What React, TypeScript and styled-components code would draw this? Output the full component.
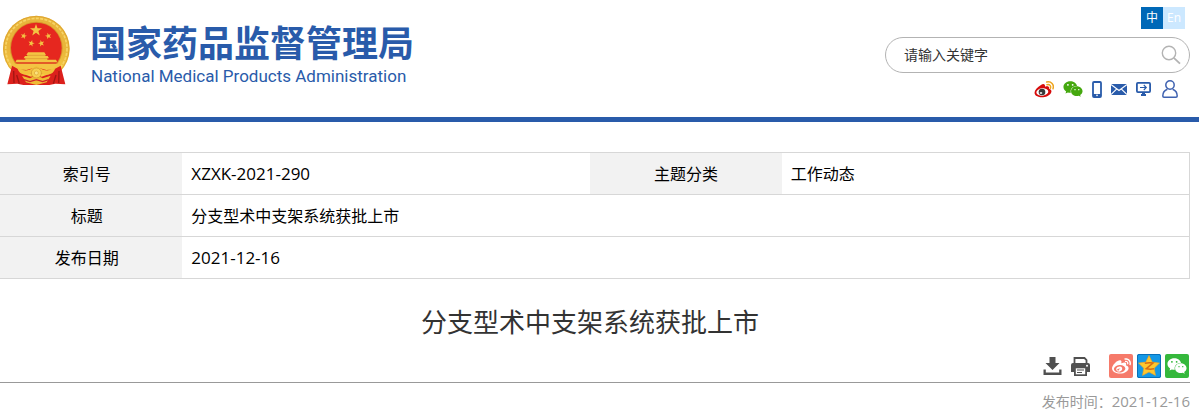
import React from "react";
import styled, { createGlobalStyle } from "styled-components";
import { FaWeibo, FaWeixin } from "react-icons/fa";

const Global = createGlobalStyle`
  * { box-sizing: border-box; }
  body {
    margin: 0;
    background: #fff;
    color: #000;
    font-family: "Open Sans", "Noto Sans CJK SC", sans-serif;
    font-size: 16px;
    overflow-x: hidden;
  }
  svg { display: block; }
`;

const Header = styled.header`
  display: flex;
  justify-content: space-between;
  height: 122px;
  padding: 7px 9px 0 3px;
  border-bottom: 5px solid #295baa;
`;

const Brand = styled.a`
  display: flex;
  align-items: flex-start;
  gap: 19px;
  padding-top: 8px;
  color: #295baa;
  text-decoration: none;
`;

const BrandText = styled.div`
  display: flex;
  flex-direction: column;
  padding-top: 10px;
  white-space: nowrap;
`;

const BrandName = styled.span`
  font: 700 36px/40px "Liberation Sans", "Noto Sans CJK SC", sans-serif;
`;

const BrandSub = styled.span`
  padding-left: 1px;
  font: 400 17px/22px Roboto, sans-serif;
`;

const Tools = styled.div`
  display: flex;
  flex-direction: column;
  align-items: flex-end;
  gap: 8px;
`;

const Languages = styled.nav`
  display: flex;
  padding-right: 5px;
`;

const Language = styled.a<{ $active?: boolean }>`
  width: 22px;
  height: 22px;
  background: ${(p) => (p.$active ? "#0068b7" : "#cce8ff")};
  color: #fff;
  font-size: 12px;
  line-height: 22px;
  text-align: center;
  text-decoration: none;
`;

const Search = styled.form`
  display: flex;
  align-items: center;
  width: 305px;
  height: 36px;
  padding: 0 8px 0 18px;
  border: 1px solid #b3b3b3;
  border-radius: 18px;
`;

const SearchInput = styled.input`
  flex: 1;
  min-width: 0;
  padding: 0;
  border: 0;
  outline: 0;
  background: none;
  color: #333;
  font: 14px/20px "Open Sans", "Noto Sans CJK SC", sans-serif;
  &::placeholder { color: #333; opacity: 1; }
`;

const IconButton = styled.button`
  display: flex;
  padding: 0;
  border: 0;
  background: none;
  color: #505050;
  cursor: pointer;
`;

const Shortcuts = styled.nav`
  display: flex;
  align-items: center;
  gap: 9px;
  height: 16px;
  padding-right: 12px;
`;

const Shortcut = styled.a`
  display: flex;
  color: #295baa;
`;

const Main = styled.main`
  margin: 30px 9px 0 -10px;
`;

const InfoTable = styled.table`
  width: 100%;
  table-layout: fixed;
  border-collapse: collapse;
  border: 1px solid #d7d7d7;
`;

const InfoRow = styled.tr`
  height: 42px;
  border-top: 1px solid #d7d7d7;
`;

const Label = styled.th`
  width: 16%;
  padding: 0;
  background: #f2f2f2;
  font-weight: 400;
  line-height: 24px;
`;

const Value = styled.td<{ $latin?: boolean }>`
  padding: 0 9px;
  font-size: ${(p) => (p.$latin ? "17px" : "16px")};
  line-height: 24px;
`;

const Title = styled.h1`
  margin: 23px 0 12px;
  color: #333;
  font-size: 26px;
  font-weight: 400;
  line-height: 40px;
  text-align: center;
`;

const Actions = styled.div`
  display: flex;
  justify-content: flex-end;
  align-items: center;
  gap: 9px;
  padding: 0 1px 4px 0;
  border-bottom: 1px solid #999;
`;

const Share = styled.div`
  display: flex;
  gap: 4px;
  padding-left: 10px;
`;

const ShareLink = styled.a<{ $bg: string }>`
  display: flex;
  align-items: center;
  justify-content: center;
  width: 24px;
  height: 24px;
  border-radius: 2px;
  background: ${(p) => p.$bg};
  color: #fff;
`;

const Published = styled.p`
  margin: 7px 0 0;
  color: #999;
  font-size: 14px;
  line-height: 22px;
  text-align: right;

  time { font-size: 15px; }
`;

const starPoints = (cx: number, cy: number, r: number, inner = 0.4, turn = 0) =>
  Array.from({ length: 10 }, (_, i) => {
    const a = ((i * 36 - 90 + turn) * Math.PI) / 180;
    const d = i % 2 ? r * inner : r;
    return `${(cx + d * Math.cos(a)).toFixed(1)},${(cy + d * Math.sin(a)).toFixed(1)}`;
  }).join(" ");

const Emblem = () => (
  <svg width="68" height="72" viewBox="9 28 204 216" aria-hidden="true">
    <defs>
      <linearGradient id="gold" x1="0" y1="0" x2="0" y2="1">
        <stop offset="0" stopColor="#e8b43c" />
        <stop offset=".5" stopColor="#e9b53a" />
        <stop offset="1" stopColor="#f8cf45" />
      </linearGradient>
    </defs>
    <ellipse cx="109" cy="129" rx="100" ry="99" fill="url(#gold)" />
    <ellipse cx="109" cy="129" rx="92" ry="91" fill="none" stroke="#f7d466" strokeWidth="5" strokeDasharray="9 4" />
    <ellipse cx="109" cy="129" rx="98" ry="97" fill="none" stroke="#d99f2b" strokeWidth="2" />
    <circle cx="109" cy="127" r="79" fill="#d8942a" />
    <circle cx="109" cy="127" r="76" fill="#e6271f" />
    <g fill="#f3c443">
      <polygon points={starPoints(108, 74, 19)} />
      <polygon points={starPoints(71, 91, 10, 0.4, 15)} />
      <polygon points={starPoints(145, 91, 10, 0.4, -15)} />
      <polygon points={starPoints(94, 113, 10, 0.4, 15)} />
      <polygon points={starPoints(124, 113, 10, 0.4, -15)} />
      <path d="M84 140h49l5 8H79zM82 148h54v3h7l4 7h-5v4h26l4 8H46l4-8h26v-4h-5l4-7h7z" />
      <path d="M45 174h128l-8 17-26 2-30-8-30 8-26-2z" />
    </g>
    <path d="M82 149h54M76 159h66M47 172h124" stroke="#d0832a" strokeWidth="1.5" />
    <path d="M36 180l18 10 14 14 25 9 16-6 16 6 25-9 14-14 18-10 14 56-30-2-18 4H70l-18-4-30 2z" fill="#dc201c" />
    <path d="M52 184c10 11 24 12 37 8l20-11 20 11c13 4 27 3 37-8-2 20-20 27-38 20l-19-9-19 9c-18 7-36 0-38-20z" fill="#f2c03a" />
    <path d="M50 208l8 26M168 208l-8 26M41 196l1 36M177 196l-1 36" stroke="#a01613" strokeWidth="4" />
    <path d="M66 210l24 8 19-10 19 10 24-8-12 20-31 8-31-8z" fill="#efbb36" />
    <circle cx="109" cy="202" r="15" fill="#f7cf50" stroke="#cf902a" strokeWidth="2" />
    <circle cx="109" cy="202" r="6" fill="#fbe27e" stroke="#dca436" strokeWidth="2" />
    <path d="M72 222l18 6 19-6 19 6 18-6" fill="none" stroke="#d2232a" strokeWidth="4" />
  </svg>
);

const WeiboColor = () => (
  <svg width="20" height="17" viewBox="0 0 60 51" aria-hidden="true">
    <path d="M22 11c7-4 12-1 11 6 8-3 14-1 12 6 7 2 9 7 6 13-7 13-31 17-43 9C-5 37 3 22 22 11z" fill="#d60b0b" />
    <ellipse cx="25" cy="33" rx="18" ry="11" fill="#fff" transform="rotate(-7 25 33)" />
    <circle cx="24" cy="33" r="10" fill="#383838" />
    <ellipse cx="21" cy="36" rx="4" ry="3" fill="#ddd" />
    <path d="M38 3c14-3 23 8 19 20M39 11c8-2 13 4 10 11" fill="none" stroke="#efa51e" strokeWidth="4.500" strokeLinecap="round" />
  </svg>
);

const Phone = () => (
  <svg width="10" height="17" viewBox="0 0 10 17" aria-hidden="true">
    <rect x="1" y="1" width="8" height="15" rx="1" fill="none" stroke="currentColor" strokeWidth="1.8" />
    <path d="M1 13h8v3H1z" fill="currentColor" />
    <circle cx="5" cy="14.4" r=".8" fill="#fff" />
  </svg>
);

const Mail = () => (
  <svg width="16" height="11" viewBox="0 0 16 11" aria-hidden="true">
    <path d="M0 0h16v11H0z" fill="currentColor" />
    <path d="M0 .5l8 6 8-6M0 10.5l5.8-5.6M16 10.5l-5.8-5.6" fill="none" stroke="#fff" strokeWidth="1.1" />
  </svg>
);

const Monitor = () => (
  <svg width="15" height="14" viewBox="0 0 15 14" aria-hidden="true">
    <rect x=".9" y=".9" width="13.2" height="9.2" rx="1" fill="none" stroke="currentColor" strokeWidth="1.8" />
    <path d="M6 10.5h3V12h1v2H5v-2h1z" fill="currentColor" />
    <path d="M4 5.5h6M7.8 3l2.5 2.5L7.8 8" fill="none" stroke="currentColor" strokeWidth="1.1" />
  </svg>
);

const User = () => (
  <svg width="18" height="18" viewBox="-2 0 18 18" aria-hidden="true">
    <g fill="none" stroke="#3f62b0" strokeWidth="1.5">
      <circle cx="8" cy="5" r="4.2" />
      <path d="M5.4 9.200C2.5 10.2.8 12.600.8 16c0 .8.4 1.200 1.200 1.200h12c.8 0 1.200-.4 1.200-1.200 0-3.400-1.700-5.800-4.600-6.800" />
    </g>
  </svg>
);

const Magnifier = () => (
  <svg width="20" height="20" viewBox="0 0 20 20" aria-hidden="true">
    <circle cx="8" cy="8" r="6.700" fill="none" stroke="#b3b3b3" strokeWidth="1.400" />
    <path d="M12.800 12.800L19 18.600" stroke="#b3b3b3" strokeWidth="1.800" />
  </svg>
);

const Download = () => (
  <svg width="19" height="18" viewBox="0 0 19 18" fill="currentColor" aria-hidden="true">
    <path d="M6.500 0h6v6h4l-7 7-7-7h4z" />
    <path d="M.5 12.500h2.300v3h13.400v-3h2.300V18H.5z" />
  </svg>
);

const Printer = () => (
  <svg width="19" height="19" viewBox="0 0 19 19" aria-hidden="true">
    <path d="M3.500 6V1h10l2 2v3" fill="none" stroke="currentColor" strokeWidth="1.800" />
    <path d="M2 6h15q2 0 2 2v7h-3v4H3v-4H0V8q0-2 2-2z" fill="currentColor" />
    <path d="M4.800 11.300h9.400v6H4.800z" fill="#fff" />
    <path d="M6 13h7M6 15.500h5" stroke="currentColor" strokeWidth="1.200" />
    <circle cx="16" cy="8.700" r="1" fill="#fff" />
  </svg>
);

const Qzone = () => (
  <svg width="24" height="24" viewBox="0 0 24 24" aria-hidden="true">
    <rect x=".5" y=".5" width="23" height="23" rx="1.500" fill="#1598e5" stroke="#0870b8" />
    <polygon points={starPoints(12, 12.5, 11, 0.5)} fill="#fec72e" stroke="#f4a51c" strokeWidth=".6" strokeLinejoin="round" />
    <path d="M7.800 9.300c3-.6 5.500-.6 8.200-.2l-6.700 5.600c2.500.6 5 .6 7.700.1" fill="none" stroke="#d66b13" strokeWidth="1.500" />
  </svg>
);

export default function App() {
  return (
    <>
      <Global />
      <Header>
        <Brand href="#">
          <Emblem />
          <BrandText>
            <BrandName>国家药品监督管理局</BrandName>
            <BrandSub>National Medical Products Administration</BrandSub>
          </BrandText>
        </Brand>
        <Tools>
          <Languages>
            <Language href="#" $active>中</Language>
            <Language href="#">En</Language>
          </Languages>
          <Search onSubmit={(e) => e.preventDefault()}>
            <SearchInput type="text" aria-label="请输入关键字" placeholder="请输入关键字" />
            <IconButton type="submit" aria-label="搜索"><Magnifier /></IconButton>
          </Search>
          <Shortcuts>
            <Shortcut href="#" aria-label="微博"><WeiboColor /></Shortcut>
            <Shortcut href="#" aria-label="微信"><FaWeixin size={20} color="#45a80f" /></Shortcut>
            <Shortcut href="#" aria-label="手机版"><Phone /></Shortcut>
            <Shortcut href="#" aria-label="邮箱"><Mail /></Shortcut>
            <Shortcut href="#" aria-label="电脑版"><Monitor /></Shortcut>
            <Shortcut href="#" aria-label="用户"><User /></Shortcut>
          </Shortcuts>
        </Tools>
      </Header>
      <Main>
        <InfoTable>
          <tbody>
            <InfoRow>
              <Label scope="row">索引号</Label>
              <Value $latin>XZXK-2021-290</Value>
              <Label scope="row">主题分类</Label>
              <Value>工作动态</Value>
            </InfoRow>
            <InfoRow>
              <Label scope="row">标题</Label>
              <Value colSpan={3}>分支型术中支架系统获批上市</Value>
            </InfoRow>
            <InfoRow>
              <Label scope="row">发布日期</Label>
              <Value $latin colSpan={3}>2021-12-16</Value>
            </InfoRow>
          </tbody>
        </InfoTable>
        <Title>分支型术中支架系统获批上市</Title>
        <Actions>
          <IconButton type="button" aria-label="下载"><Download /></IconButton>
          <IconButton type="button" aria-label="打印"><Printer /></IconButton>
          <Share>
            <ShareLink href="#" $bg="#f67a6a" aria-label="分享到微博"><FaWeibo size={19} /></ShareLink>
            <ShareLink href="#" $bg="#1598e5" aria-label="分享到QQ空间"><Qzone /></ShareLink>
            <ShareLink href="#" $bg="#35b83c" aria-label="分享到微信"><FaWeixin size={20} /></ShareLink>
          </Share>
        </Actions>
        <Published>发布时间：<time dateTime="2021-12-16">2021-12-16</time></Published>
      </Main>
    </>
  );
}
